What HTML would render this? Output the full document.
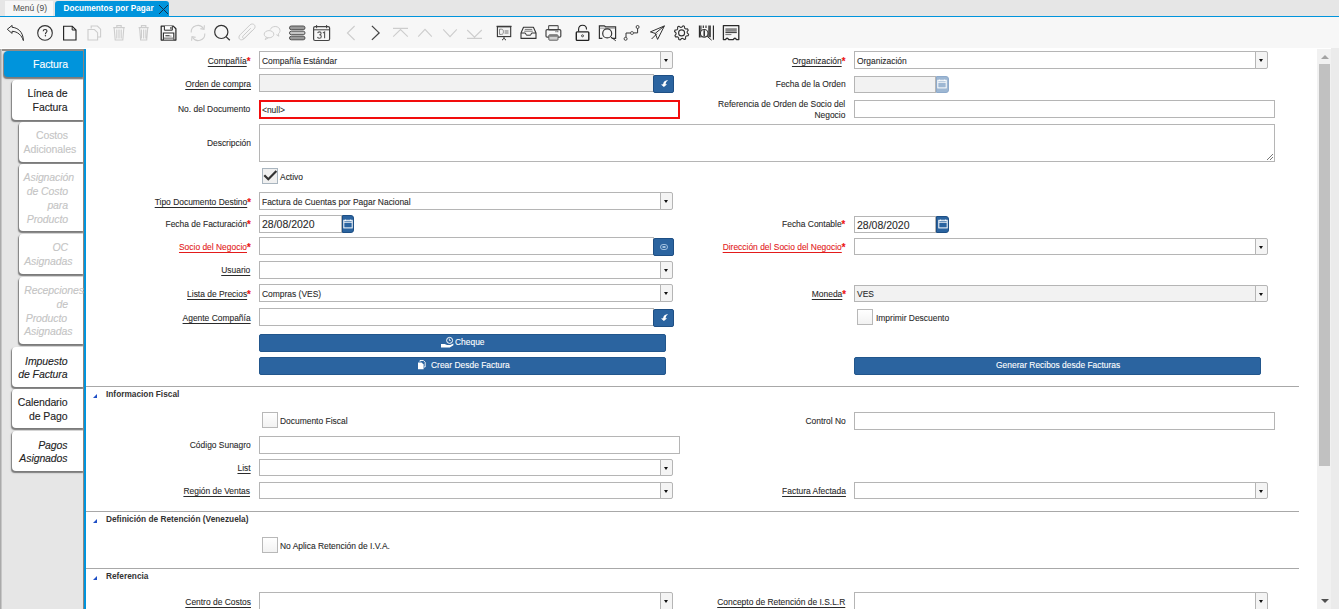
<!DOCTYPE html><html><head><meta charset='utf-8'><style>
*{box-sizing:border-box;margin:0;padding:0}
html,body{width:1339px;height:609px;overflow:hidden;background:#fff;font-family:"Liberation Sans", sans-serif;color:#333;position:relative}
.a{position:absolute}
.tx{position:absolute;white-space:nowrap;-webkit-text-stroke:0.1px currentColor}
u{text-decoration:underline;text-underline-offset:1.5px;text-decoration-thickness:1px}
.req{color:#ec1111;font-weight:bold;font-size:10.5px;position:relative;top:0.8px;letter-spacing:0;line-height:0}
.inp{position:absolute;border:1px solid #b5b5b5;background:#fff}
.ro{background:#f2f2f2}
.cbtn{position:absolute;border:1px solid #b5b5b5;border-radius:0 2px 2px 0;background:#f4f4f4}
.cbtn:after{content:"";position:absolute;left:3.4px;top:7px;border-left:2.8px solid transparent;border-right:2.8px solid transparent;border-top:3.4px solid #111}
.bbtn{position:absolute;background:#2b64a0;border:1px solid #1e4f84;border-radius:2px}
.btn{position:absolute;background:#2b64a0;border:1px solid #22568c;border-radius:2px}
.chk{position:absolute;width:16px;height:16px;border:1px solid #b8b8b8;background:linear-gradient(#fff,#f2f2f2)}
.chk.on{border-color:#a9b5bf;background:#f0f0f0}
.sep{position:absolute;left:86px;width:1213px;height:1px;background:#a8a8a8}
.tri{position:absolute;width:0;height:0;border-left:4.5px solid transparent;border-bottom:4.5px solid #1f4fc6}
.tab{position:absolute;background:#fff;border-radius:4px 0 0 4px;box-shadow:-0.5px 1.2px 1.2px 0 #7a7a7a}
</style></head><body>
<div class="a" style="left:0;top:0;width:1339px;height:16px;background:#e6e6e6"></div>
<div class="a" style="left:5px;top:1px;width:48px;height:15px;background:#f7f7f7"></div>
<div class="tx" style="left:13px;top:2.55px;font-size:8.5px;line-height:11px;color:#4a4a4a;-webkit-text-stroke:0">Menú (9)</div>
<div class="a" style="left:55px;top:1px;width:114px;height:16px;background:#0094dc;border-radius:3px 3px 0 0"></div>
<div class="tx" style="left:63.5px;top:3.26px;font-size:8.2px;line-height:11px;color:#fff;font-weight:bold;-webkit-text-stroke:0">Documentos por Pagar</div>
<svg class="a" style="left:158px;top:4px" width="11" height="11" viewBox="0 0 11 11"><path d="M1 1L10 10M10 1L1 10" stroke="#12304a" stroke-width="1"/></svg>
<div class="a" style="left:0;top:16px;width:1339px;height:1px;background:#0094dc"></div>
<div class="a" style="left:0;top:17px;width:1339px;height:31px;background:#f7f7f7"></div>
<div class="a" style="left:0;top:48px;width:86px;height:1px;background:#fff"></div>
<div class="a" style="left:0;top:49px;width:86px;height:560px;background:#e6e6e6;border-top:2px solid #918c88"></div>
<div class="a" style="left:0;top:49px;width:2px;height:560px;background:linear-gradient(90deg,#9c9c9c,#d4d4d4)"></div>
<div class="a" style="left:83px;top:49px;width:1px;height:560px;background:#8c8682"></div>
<div class="tab" style="left:4px;top:51px;width:79px;height:26px;background:#0094dc"></div>
<div class="tx" style="right:1271px;text-align:right;top:57.06px;font-size:10.5px;line-height:14px;color:#fff;letter-spacing:-0.1px;">Factura</div>
<div class="tab" style="left:12px;top:80px;width:71px;height:40px;background:#fff"></div>
<div class="tx" style="right:1271.5px;text-align:right;top:86.06px;font-size:10.5px;line-height:14px;color:#222;letter-spacing:-0.1px;">Línea de</div>
<div class="tx" style="right:1271.5px;text-align:right;top:99.86px;font-size:10.5px;line-height:14px;color:#222;letter-spacing:-0.1px;">Factura</div>
<div class="tab" style="left:19px;top:122px;width:64px;height:40px;background:#fff"></div>
<div class="tx" style="right:1271px;text-align:right;top:128.36px;font-size:10.5px;line-height:14px;color:#c4c4c4;letter-spacing:-0.1px;">Costos</div>
<div class="tx" style="left:23.6px;top:141.96px;font-size:10.5px;line-height:14px;color:#c4c4c4;letter-spacing:-0.1px;">Adicionales</div>
<div class="tab" style="left:19px;top:164px;width:64px;height:67px;background:#fff"></div>
<div class="tx" style="left:23.6px;top:170.36px;font-size:10.5px;line-height:14px;color:#c4c4c4;font-style:italic;letter-spacing:-0.1px;">Asignación</div>
<div class="tx" style="right:1271px;text-align:right;top:184.16px;font-size:10.5px;line-height:14px;color:#c4c4c4;font-style:italic;letter-spacing:-0.1px;">de Costo</div>
<div class="tx" style="right:1271px;text-align:right;top:197.86px;font-size:10.5px;line-height:14px;color:#c4c4c4;font-style:italic;letter-spacing:-0.1px;">para</div>
<div class="tx" style="right:1271px;text-align:right;top:211.66px;font-size:10.5px;line-height:14px;color:#c4c4c4;font-style:italic;letter-spacing:-0.1px;">Producto</div>
<div class="tab" style="left:19px;top:234px;width:64px;height:40px;background:#fff"></div>
<div class="tx" style="right:1271px;text-align:right;top:240.06px;font-size:10.5px;line-height:14px;color:#c4c4c4;font-style:italic;letter-spacing:-0.1px;">OC</div>
<div class="tx" style="left:24.2px;top:253.86px;font-size:10.5px;line-height:14px;color:#c4c4c4;font-style:italic;letter-spacing:-0.1px;">Asignadas</div>
<div class="tab" style="left:19px;top:276.5px;width:64px;height:67.5px;background:#fff"></div>
<div class="tx" style="left:24.2px;top:283.36px;font-size:10.5px;line-height:14px;color:#c4c4c4;font-style:italic;letter-spacing:-0.1px;">Recepciones</div>
<div class="tx" style="right:1271px;text-align:right;top:296.96px;font-size:10.5px;line-height:14px;color:#c4c4c4;font-style:italic;letter-spacing:-0.1px;">de</div>
<div class="tx" style="left:25.8px;top:310.56px;font-size:10.5px;line-height:14px;color:#c4c4c4;font-style:italic;letter-spacing:-0.1px;">Producto</div>
<div class="tx" style="left:24.2px;top:324.16px;font-size:10.5px;line-height:14px;color:#c4c4c4;font-style:italic;letter-spacing:-0.1px;">Asignadas</div>
<div class="tab" style="left:12px;top:347px;width:71px;height:40px;background:#fff"></div>
<div class="tx" style="right:1271.5px;text-align:right;top:353.56px;font-size:10.5px;line-height:14px;color:#222;font-style:italic;letter-spacing:-0.1px;">Impuesto</div>
<div class="tx" style="right:1271.5px;text-align:right;top:367.36px;font-size:10.5px;line-height:14px;color:#222;font-style:italic;letter-spacing:-0.1px;">de Factura</div>
<div class="tab" style="left:12px;top:389px;width:71px;height:39px;background:#fff"></div>
<div class="tx" style="right:1271.5px;text-align:right;top:395.26px;font-size:10.5px;line-height:14px;color:#222;letter-spacing:-0.1px;">Calendario</div>
<div class="tx" style="right:1271.5px;text-align:right;top:409.06px;font-size:10.5px;line-height:14px;color:#222;letter-spacing:-0.1px;">de Pago</div>
<div class="tab" style="left:12px;top:431px;width:71px;height:40px;background:#fff"></div>
<div class="tx" style="right:1271.5px;text-align:right;top:437.66px;font-size:10.5px;line-height:14px;color:#222;font-style:italic;letter-spacing:-0.1px;">Pagos</div>
<div class="tx" style="right:1271.5px;text-align:right;top:451.46px;font-size:10.5px;line-height:14px;color:#222;font-style:italic;letter-spacing:-0.1px;">Asignados</div>
<div class="a" style="left:84px;top:49px;width:2px;height:560px;background:#0094dc"></div>
<div class="a" style="left:86px;top:48px;width:1231px;height:561px;background:#fff"></div>
<div class="tx" style="right:1088.5px;text-align:right;transform:scaleX(0.9);transform-origin:100% 0;top:55.24px;font-size:9.4px;line-height:12px;color:#2a2a2a"><u>Compañía</u><span class="req">*</span></div>
<div class="inp " style="left:259px;top:51px;width:401.5px;height:18px"></div>
<div class="tx" style="left:262px;transform:scaleX(0.9);transform-origin:0 0;top:55.34px;font-size:9.4px;line-height:12px;color:#2a2a2a;">Compañía Estándar</div>
<div class="cbtn" style="left:659.5px;top:51px;width:13px;height:18px"></div>
<div class="tx" style="right:493.5px;text-align:right;transform:scaleX(0.9);transform-origin:100% 0;top:55.24px;font-size:9.4px;line-height:12px;color:#2a2a2a"><u>Organización</u><span class="req">*</span></div>
<div class="inp " style="left:854px;top:51px;width:401.5px;height:17.5px"></div>
<div class="tx" style="left:857px;transform:scaleX(0.9);transform-origin:0 0;top:55.09px;font-size:9.4px;line-height:12px;color:#2a2a2a;">Organización</div>
<div class="cbtn" style="left:1254.5px;top:51px;width:13px;height:17.5px"></div>
<div class="tx" style="right:1088.5px;text-align:right;transform:scaleX(0.9);transform-origin:100% 0;top:78.24px;font-size:9.4px;line-height:12px;color:#2a2a2a"><u>Orden de compra</u></div>
<div class="inp ro" style="left:259px;top:74px;width:395px;height:18px"></div>
<div class="bbtn" style="left:653px;top:75px;width:21px;height:18px"></div>
<svg class="a" style="left:658.5px;top:79.0px" width="10" height="10" viewBox="0 0 10 10"><path d="M2 5.5L4.9 8.1L8.1 5.3L6.5 5.2Q6.7 3 9.1 1.1Q4.5 1.5 4.1 5.2Z" fill="#fff"/></svg>
<div class="tx" style="right:493.5px;text-align:right;transform:scaleX(0.9);transform-origin:100% 0;top:78.24px;font-size:9.4px;line-height:12px;color:#2a2a2a">Fecha de la Orden</div>
<div class="inp ro" style="left:854px;top:75.5px;width:82px;height:17.0px"></div>
<div class="bbtn" style="left:936px;top:75.5px;width:12.5px;height:17.0px;background:#9db7d3;border-color:#8eaacb;border-radius:0 3px 3px 0"></div>
<svg class="a" style="left:937.25px;top:79.0px" width="10" height="10" viewBox="0 0 10 10"><rect x="0.8" y="1.3" width="8.4" height="7.6" fill="none" stroke="#fff" stroke-width="1"/><path d="M0.8 3.2H9.2" stroke="#fff" stroke-width="1"/><path d="M2.5 0.6V2M7.5 0.6V2" stroke="#fff" stroke-width="0.8"/></svg>
<div class="tx" style="right:1088.5px;text-align:right;transform:scaleX(0.9);transform-origin:100% 0;top:103.04px;font-size:9.4px;line-height:12px;color:#2a2a2a">No. del Documento</div>
<div class="a" style="left:259px;top:100px;width:421px;height:19px;border:2px solid #f20d0d;background:#fff"></div>
<div class="tx" style="left:262px;transform:scaleX(0.9);transform-origin:0 0;top:104.34px;font-size:9.4px;line-height:12px;color:#2a2a2a">&lt;null&gt;</div>
<div class="tx" style="right:493.5px;text-align:right;transform:scaleX(0.9);transform-origin:100% 0;top:97.84px;font-size:9.4px;line-height:12px;color:#2a2a2a">Referencia de Orden de Socio del</div>
<div class="tx" style="right:493.5px;text-align:right;transform:scaleX(0.9);transform-origin:100% 0;top:108.64px;font-size:9.4px;line-height:12px;color:#2a2a2a">Negocio</div>
<div class="inp " style="left:854px;top:100px;width:421px;height:17.5px"></div>
<div class="tx" style="right:1088.5px;text-align:right;transform:scaleX(0.9);transform-origin:100% 0;top:136.74px;font-size:9.4px;line-height:12px;color:#2a2a2a">Descripción</div>
<div class="inp " style="left:259px;top:124px;width:1016px;height:38px"></div>
<svg class="a" style="left:1265px;top:152px" width="9" height="9"><path d="M2 8L8 2M5 8L8 5" stroke="#555" stroke-width="0.8"/></svg>
<div class="chk on" style="left:262px;top:168px"></div>
<svg class="a" style="left:262px;top:168px" width="16" height="16" viewBox="0 0 16 16"><path d="M2.3 7.2L6.3 11.2L14.4 3" fill="none" stroke="#333" stroke-width="2.2"/></svg>
<div class="tx" style="left:280px;transform:scaleX(0.9);transform-origin:0 0;top:171.24px;font-size:9.4px;line-height:12px;color:#2a2a2a">Activo</div>
<div class="tx" style="right:1088.5px;text-align:right;transform:scaleX(0.9);transform-origin:100% 0;top:196.24px;font-size:9.4px;line-height:12px;color:#2a2a2a"><u>Tipo Documento Destino</u><span class="req">*</span></div>
<div class="inp " style="left:259px;top:192px;width:401.5px;height:17.5px"></div>
<div class="tx" style="left:262px;transform:scaleX(0.9);transform-origin:0 0;top:196.09px;font-size:9.4px;line-height:12px;color:#2a2a2a;">Factura de Cuentas por Pagar Nacional</div>
<div class="cbtn" style="left:659.5px;top:192px;width:13px;height:17.5px"></div>
<div class="tx" style="right:1088.5px;text-align:right;transform:scaleX(0.9);transform-origin:100% 0;top:218.24px;font-size:9.4px;line-height:12px;color:#2a2a2a">Fecha de Facturación<span class="req">*</span></div>
<div class="inp " style="left:259px;top:215px;width:82.5px;height:17.5px"></div>
<div class="tx" style="left:262px;top:217.30px;font-size:10.5px;line-height:14px;color:#2a2a2a;letter-spacing:0">28/08/2020</div>
<div class="bbtn" style="left:341.5px;top:215px;width:12.5px;height:17.5px;background:#2b64a0;border-color:#1e4f84;border-radius:0 3px 3px 0"></div>
<svg class="a" style="left:342.75px;top:218.75px" width="10" height="10" viewBox="0 0 10 10"><rect x="0.8" y="1.3" width="8.4" height="7.6" fill="none" stroke="#fff" stroke-width="1"/><path d="M0.8 3.2H9.2" stroke="#fff" stroke-width="1"/><path d="M2.5 0.6V2M7.5 0.6V2" stroke="#fff" stroke-width="0.8"/></svg>
<div class="tx" style="right:493.5px;text-align:right;transform:scaleX(0.9);transform-origin:100% 0;top:218.24px;font-size:9.4px;line-height:12px;color:#2a2a2a">Fecha Contable<span class="req">*</span></div>
<div class="inp " style="left:854px;top:215.5px;width:82.29999999999995px;height:17.0px"></div>
<div class="tx" style="left:857px;top:217.55px;font-size:10.5px;line-height:14px;color:#2a2a2a;letter-spacing:0">28/08/2020</div>
<div class="bbtn" style="left:936.3px;top:215.5px;width:12.5px;height:17.0px;background:#2b64a0;border-color:#1e4f84;border-radius:0 3px 3px 0"></div>
<svg class="a" style="left:937.55px;top:219.0px" width="10" height="10" viewBox="0 0 10 10"><rect x="0.8" y="1.3" width="8.4" height="7.6" fill="none" stroke="#fff" stroke-width="1"/><path d="M0.8 3.2H9.2" stroke="#fff" stroke-width="1"/><path d="M2.5 0.6V2M7.5 0.6V2" stroke="#fff" stroke-width="0.8"/></svg>
<div class="tx" style="right:1088.5px;text-align:right;transform:scaleX(0.9);transform-origin:100% 0;top:240.74px;font-size:9.4px;line-height:12px;color:#2a2a2a"><u style="color:#e31b1b">Socio del Negocio</u><span class="req">*</span></div>
<div class="inp " style="left:259px;top:237px;width:395px;height:18px"></div>
<div class="bbtn" style="left:653px;top:238px;width:21px;height:18px"></div>
<svg class="a" style="left:658.5px;top:242.0px" width="10" height="10" viewBox="0 0 10 10"><rect x="1.5" y="2.5" width="7" height="5" rx="2.5" fill="none" stroke="#9fc0e0" stroke-width="1"/><rect x="3.5" y="4" width="3" height="2" fill="#9fc0e0"/></svg>
<div class="tx" style="right:493.5px;text-align:right;transform:scaleX(0.9);transform-origin:100% 0;top:240.74px;font-size:9.4px;line-height:12px;color:#2a2a2a"><u style="color:#e31b1b">Dirección del Socio del Negocio</u><span class="req">*</span></div>
<div class="inp " style="left:854px;top:237.5px;width:401.5px;height:17.5px"></div>
<div class="cbtn" style="left:1254.5px;top:237.5px;width:13px;height:17.5px"></div>
<div class="tx" style="right:1088.5px;text-align:right;transform:scaleX(0.9);transform-origin:100% 0;top:264.24px;font-size:9.4px;line-height:12px;color:#2a2a2a"><u>Usuario</u></div>
<div class="inp " style="left:259px;top:261px;width:401.5px;height:17.5px"></div>
<div class="cbtn" style="left:659.5px;top:261px;width:13px;height:17.5px"></div>
<div class="tx" style="right:1088.5px;text-align:right;transform:scaleX(0.9);transform-origin:100% 0;top:287.74px;font-size:9.4px;line-height:12px;color:#2a2a2a"><u>Lista de Precios</u><span class="req">*</span></div>
<div class="inp " style="left:259px;top:284px;width:401.5px;height:17.5px"></div>
<div class="tx" style="left:262px;transform:scaleX(0.9);transform-origin:0 0;top:288.09px;font-size:9.4px;line-height:12px;color:#2a2a2a;">Compras (VES)</div>
<div class="cbtn" style="left:659.5px;top:284px;width:13px;height:17.5px"></div>
<div class="tx" style="right:493.5px;text-align:right;transform:scaleX(0.9);transform-origin:100% 0;top:287.74px;font-size:9.4px;line-height:12px;color:#2a2a2a"><u>Moneda</u><span class="req">*</span></div>
<div class="inp ro" style="left:854px;top:284.5px;width:401.5px;height:17.0px"></div>
<div class="tx" style="left:857px;transform:scaleX(0.9);transform-origin:0 0;top:288.34px;font-size:9.4px;line-height:12px;color:#2a2a2a;">VES</div>
<div class="cbtn" style="left:1254.5px;top:284.5px;width:13px;height:17.0px"></div>
<div class="tx" style="right:1088.5px;text-align:right;transform:scaleX(0.9);transform-origin:100% 0;top:311.74px;font-size:9.4px;line-height:12px;color:#2a2a2a"><u>Agente Compañía</u></div>
<div class="inp " style="left:259px;top:308px;width:395px;height:17.5px"></div>
<div class="bbtn" style="left:653px;top:309px;width:21px;height:17.5px"></div>
<svg class="a" style="left:658.5px;top:312.75px" width="10" height="10" viewBox="0 0 10 10"><path d="M2 5.5L4.9 8.1L8.1 5.3L6.5 5.2Q6.7 3 9.1 1.1Q4.5 1.5 4.1 5.2Z" fill="#fff"/></svg>
<div class="chk" style="left:857px;top:309px"></div>
<div class="tx" style="left:875.5px;transform:scaleX(0.9);transform-origin:0 0;top:311.74px;font-size:9.4px;line-height:12px;color:#2a2a2a">Imprimir Descuento</div>
<div class="btn" style="left:259px;top:334px;width:407px;height:18px"></div>
<div class="tx" style="left:455.2px;transform:scaleX(0.9);transform-origin:0 0;top:336.44px;font-size:9.4px;line-height:12px;color:#fff">Cheque</div>
<svg class="a" style="left:440px;top:336px" width="15" height="13" viewBox="440 336 15 13"><circle cx="449.6" cy="340.4" r="3" fill="none" stroke="#fff" stroke-width="1"/><path d="M449.4 338.6V340.6H450.8" fill="none" stroke="#fff" stroke-width="0.8"/><path d="M441 344H444.6L447.2 345H450.2L453.4 343.4V345.2L449.8 347.4H441Z" fill="#fff"/></svg>
<div class="btn" style="left:259px;top:357px;width:407px;height:18px"></div>
<div class="tx" style="left:430.8px;transform:scaleX(0.9);transform-origin:0 0;top:358.84px;font-size:9.4px;line-height:12px;color:#fff">Crear Desde Factura</div>
<svg class="a" style="left:416px;top:359px" width="11" height="12" viewBox="416 359 11 12"><path d="M420 361.8V360.5H423.4L425.2 362.3V367H424" fill="none" stroke="#fff" stroke-width="0.9"/><path d="M418 362.4H421.6L423.6 364.4V369.2H418Z" fill="#fff"/></svg>
<div class="btn" style="left:854px;top:357px;width:407px;height:18px"></div>
<div class="tx" style="left:996px;transform:scaleX(0.9);transform-origin:0 0;top:359.24px;font-size:9.4px;line-height:12px;color:#fff">Generar Recibos desde Facturas</div>
<div class="sep" style="top:386px"></div>
<div class="tri" style="left:93px;top:394.3px"></div>
<div class="tx" style="left:106px;top:389.22px;font-size:8.3px;line-height:11px;font-weight:bold;color:#333;-webkit-text-stroke:0">Informacion Fiscal</div>
<div class="chk" style="left:262px;top:411.5px"></div>
<div class="tx" style="left:280px;transform:scaleX(0.9);transform-origin:0 0;top:414.74px;font-size:9.4px;line-height:12px;color:#2a2a2a">Documento Fiscal</div>
<div class="tx" style="right:493.5px;text-align:right;transform:scaleX(0.9);transform-origin:100% 0;top:415.24px;font-size:9.4px;line-height:12px;color:#2a2a2a">Control No</div>
<div class="inp " style="left:854px;top:412px;width:421px;height:17.5px"></div>
<div class="tx" style="right:1088.5px;text-align:right;transform:scaleX(0.9);transform-origin:100% 0;top:439.24px;font-size:9.4px;line-height:12px;color:#2a2a2a">Código Sunagro</div>
<div class="inp " style="left:259px;top:436px;width:421px;height:18px"></div>
<div class="tx" style="right:1088.5px;text-align:right;transform:scaleX(0.9);transform-origin:100% 0;top:461.74px;font-size:9.4px;line-height:12px;color:#2a2a2a"><u>List</u></div>
<div class="inp " style="left:259px;top:458.5px;width:401.5px;height:17.5px"></div>
<div class="cbtn" style="left:659.5px;top:458.5px;width:13px;height:17.5px"></div>
<div class="tx" style="right:1088.5px;text-align:right;transform:scaleX(0.9);transform-origin:100% 0;top:484.74px;font-size:9.4px;line-height:12px;color:#2a2a2a"><u>Región de Ventas</u></div>
<div class="inp " style="left:259px;top:481.5px;width:401.5px;height:17.0px"></div>
<div class="cbtn" style="left:659.5px;top:481.5px;width:13px;height:17.0px"></div>
<div class="tx" style="right:493.5px;text-align:right;transform:scaleX(0.9);transform-origin:100% 0;top:484.74px;font-size:9.4px;line-height:12px;color:#2a2a2a"><u>Factura Afectada</u></div>
<div class="inp " style="left:854px;top:481.5px;width:402px;height:17.0px"></div>
<div class="cbtn" style="left:1255px;top:481.5px;width:13px;height:17.0px"></div>
<div class="sep" style="top:511px"></div>
<div class="tri" style="left:93px;top:519.3px"></div>
<div class="tx" style="left:106px;top:514.42px;font-size:8.3px;line-height:11px;font-weight:bold;color:#333;-webkit-text-stroke:0">Definición de Retención (Venezuela)</div>
<div class="chk" style="left:262px;top:537px"></div>
<div class="tx" style="left:280px;transform:scaleX(0.9);transform-origin:0 0;top:540.24px;font-size:9.4px;line-height:12px;color:#2a2a2a">No Aplica Retención de I.V.A.</div>
<div class="sep" style="top:568px"></div>
<div class="tri" style="left:93px;top:576.3px"></div>
<div class="tx" style="left:106px;top:571.42px;font-size:8.3px;line-height:11px;font-weight:bold;color:#333;-webkit-text-stroke:0">Referencia</div>
<div class="tx" style="right:1088.5px;text-align:right;transform:scaleX(0.9);transform-origin:100% 0;top:595.74px;font-size:9.4px;line-height:12px;color:#2a2a2a"><u>Centro de Costos</u></div>
<div class="inp " style="left:259px;top:592px;width:401.5px;height:20px"></div>
<div class="cbtn" style="left:659.5px;top:592px;width:13px;height:20px"></div>
<div class="tx" style="right:493.5px;text-align:right;transform:scaleX(0.9);transform-origin:100% 0;top:595.74px;font-size:9.4px;line-height:12px;color:#2a2a2a"><u>Concepto de Retención de I.S.L.R</u></div>
<div class="inp " style="left:854px;top:592px;width:401.5px;height:20px"></div>
<div class="cbtn" style="left:1254.5px;top:592px;width:13px;height:20px"></div>
<div class="a" style="left:1317px;top:49px;width:14px;height:560px;background:#f1f1f1"></div>
<div class="a" style="left:1331px;top:48px;width:8px;height:561px;background:#ebebeb"></div>
<div class="a" style="left:1319px;top:64px;width:11px;height:402px;background:#c1c1c1"></div>
<svg class="a" style="left:1321px;top:54px" width="8" height="6"><path d="M0 5L4 1L8 5Z" fill="#a3a3a3"/></svg>
<svg class="a" style="left:1321px;top:598px" width="8" height="6"><path d="M0 1L8 1L4 5Z" fill="#505050"/></svg>
<svg class="a" style="left:0;top:0" width="760" height="48" viewBox="0 0 760 48"><path d="M7.3 29.3L12.1 25.4V27.3C17.6 27.7 23.2 31.6 23.4 40.6C21.7 35.3 17.6 31.5 12.1 31.3V33.4Z" fill="none" stroke="#333" stroke-width="1" stroke-linejoin="round"/><circle cx="45" cy="32.9" r="7.3" fill="none" stroke="#333" stroke-width="1.1"/><path d="M43.2 31.3C43.2 30 44 29.5 45.1 29.5C46.3 29.5 47 30.2 47 31.1C47 32.4 45.4 32.6 45.4 34.3" fill="none" stroke="#333" stroke-width="1.1"/><circle cx="45.4" cy="35.7" r="0.7" fill="#333"/><path d="M63.6 26.2H72.2L76 30V40H63.6Z" fill="none" stroke="#222" stroke-width="1.15"/><path d="M72.2 26.2V30H76" fill="none" stroke="#222" stroke-width="1"/><path d="M91.2 28.5V26H97.4L100.6 29.2V37H98" fill="none" stroke="#cdcdcd" stroke-width="1.1"/><path d="M88 29.5H94.4L97.6 32.7V40H88Z" fill="none" stroke="#cdcdcd" stroke-width="1.1"/><path d="M113.2 27.6H124.8M116.8 27.6V25.6H121.2V27.6M114.2 28.2L115.2 40H122.8L123.8 28.2M116.8 29.5V38.5M119.0 29.5V38.5M121.2 29.5V38.5" fill="none" stroke="#cdcdcd" stroke-width="1.1"/><path d="M138.6 27.6H148.7M141.45 27.6V25.6H145.84999999999997V27.6M139.6 28.2L140.6 40H146.7L147.7 28.2M141.45 29.5V38.5M143.64999999999998 29.5V38.5M145.84999999999997 29.5V38.5" fill="none" stroke="#cdcdcd" stroke-width="1.1"/><path d="M161.2 26.1H173.3L175.9 28.7V40.1H161.2Z" fill="none" stroke="#2a2a2a" stroke-width="1.25" stroke-linejoin="round"/><path d="M164.4 26.1V30.2H172.3V26.1" fill="#fff" stroke="#2a2a2a" stroke-width="1"/><rect x="170.4" y="27" width="1" height="2.3" fill="#2a2a2a"/><path d="M163.4 40.1V33H173.8V40.1" fill="#fff" stroke="#2a2a2a" stroke-width="1.1"/><rect x="163.9" y="37.4" width="9.4" height="2.4" fill="#9a9a9a"/><rect x="165.4" y="35.2" width="4.2" height="1.1" fill="#333"/><rect x="169.6" y="35.7" width="2" height="0.7" fill="#666"/><path d="M191.2 32.5A6.6 6.6 0 0 1 203.5 28.8M204.8 33.5A6.6 6.6 0 0 1 192.5 37.2" fill="none" stroke="#cdcdcd" stroke-width="1.1"/><path d="M204.4 25.2L204 29.4L200.4 28.6M191.6 40.8L192 36.6L195.6 37.4" fill="none" stroke="#cdcdcd" stroke-width="1.1"/><circle cx="221.3" cy="31.9" r="6.6" fill="none" stroke="#333" stroke-width="1.2"/><path d="M226 36.6L229.8 40.2" stroke="#333" stroke-width="1.3"/><path d="M252.5 30.2L244 38.7C242.6 40.1 240.5 40.1 239.6 39.1C238.6 38.1 238.7 36.2 240.1 34.8L250 24.9C251.3 23.6 253.3 23.8 254.3 24.8C255.3 25.8 255.4 27.6 254.1 28.9L245.2 37.8C244.4 38.6 243.4 38.6 242.9 38.1C242.4 37.6 242.4 36.6 243.2 35.8L250.8 28.2" fill="none" stroke="#cdcdcd" stroke-width="1"/><ellipse cx="269" cy="34.2" rx="4.8" ry="3.6" fill="none" stroke="#cdcdcd" stroke-width="1"/><path d="M266.4 37.3L265.2 39.6L268.4 37.8" fill="none" stroke="#cdcdcd" stroke-width="1"/><path d="M270.2 29.6C271 27.6 273 26.5 275.2 26.5C278 26.5 280 28.3 280 30.6C280 32 279.3 33.2 278.2 34L278.9 36.2L276.4 34.7" fill="none" stroke="#cdcdcd" stroke-width="1"/><rect x="289.5" y="26" width="15.5" height="3.6999999999999993" rx="1.8" fill="#9a9a9a" stroke="#505050" stroke-width="1"/><rect x="289.5" y="31.2" width="15.5" height="3.5000000000000036" rx="1.8" fill="#c6c6c6" stroke="#505050" stroke-width="1"/><rect x="289.5" y="36.2" width="15.5" height="3.5999999999999943" rx="1.8" fill="#9a9a9a" stroke="#505050" stroke-width="1"/><rect x="313.6" y="26.6" width="16" height="13.9" rx="1.5" fill="none" stroke="#444" stroke-width="1.2"/><path d="M313.6 29.8H329.6M316.6 25V28.2M326.6 25V28.2" stroke="#444" stroke-width="1"/><path d="M317.6 33.1C317.9 32.3 318.6 31.9 319.4 31.9C320.4 31.9 321.1 32.5 321.1 33.3C321.1 34.2 320.3 34.8 319.3 34.8C320.4 34.8 321.3 35.3 321.3 36.4C321.3 37.5 320.4 38.2 319.4 38.2C318.5 38.2 317.8 37.8 317.5 37" fill="none" stroke="#555" stroke-width="1.1"/><path d="M322.9 33L324.6 31.9V38.3" fill="none" stroke="#555" stroke-width="1.1"/><path d="M354.6 26L347.4 33L354.6 40" fill="none" stroke="#cdcdcd" stroke-width="1.1"/><path d="M371.9 25.9L379.1 32.9L371.9 39.9" fill="none" stroke="#444" stroke-width="1.3"/><path d="M393 28.4H408M393.2 36.6L400.5 29.6L407.8 36.6" fill="none" stroke="#cdcdcd" stroke-width="1.1"/><path d="M418.2 36.6L425 29.4L431.8 36.6" fill="none" stroke="#cdcdcd" stroke-width="1.1"/><path d="M443.2 29.4L450 36.6L456.8 29.4" fill="none" stroke="#cdcdcd" stroke-width="1.1"/><path d="M467.2 30L474.5 37.2L481.8 30M467 38.4H482" fill="none" stroke="#cdcdcd" stroke-width="1.1"/><path d="M496.6 26.4H511.5" stroke="#333" stroke-width="1.3"/><rect x="497.4" y="26.8" width="13.3" height="9.8" fill="#f2f2f2" stroke="#333" stroke-width="1.1"/><path d="M499.5 29.2H501.5C503 29.2 503.4 30.3 503.4 31.8C503.4 33.3 503 34.4 501.5 34.4H499.5Z" fill="none" stroke="#888" stroke-width="1"/><path d="M504.6 31H508.5M504.6 33H508.5" stroke="#777" stroke-width="1.1"/><path d="M504 36.8V38.3M502 40.2L504 38.3L506 40.2" fill="none" stroke="#333" stroke-width="1"/><path d="M523.5 27.3H533.4L536 33V38.4H521V33Z" fill="none" stroke="#333" stroke-width="1.1" stroke-linejoin="round"/><path d="M521 33H525.4L526.4 35.2H530.6L531.6 33H536" fill="none" stroke="#333" stroke-width="1"/><path d="M524.8 29.4H532.2M524.2 31.2H532.8" stroke="#777" stroke-width="1"/><rect x="548.6" y="25.6" width="9.6" height="4.4" rx="0.8" fill="none" stroke="#555" stroke-width="1.1"/><rect x="546" y="29.6" width="14.8" height="7.6" rx="1.2" fill="none" stroke="#444" stroke-width="1.2"/><rect x="548.8" y="34.8" width="9.2" height="5.4" rx="0.8" fill="#d0d0d0" stroke="#555" stroke-width="0.9"/><path d="M549.4 36H557.4" stroke="#444" stroke-width="0.9"/><rect x="555.5" y="31.2" width="1" height="1" fill="#333"/><rect x="557.3" y="31.2" width="1" height="1" fill="#333"/><path d="M578.6 31.6V29.4C578.6 26.9 580.3 25.2 582.6 25.2C584.9 25.2 586.5 26.9 586.5 29.2V29.6" fill="none" stroke="#222" stroke-width="1.1"/><rect x="576.3" y="31.9" width="12.5" height="8.5" rx="0.8" fill="none" stroke="#222" stroke-width="1.4"/><circle cx="582.5" cy="35.8" r="1" fill="none" stroke="#333" stroke-width="0.9"/><path d="M602.4 38.3H599.4V25.8H604.2L605.6 26.8H615.6V38.3H611.6" fill="none" stroke="#333" stroke-width="1.2"/><path d="M599.8 28.2H615.2" stroke="#999" stroke-width="1"/><circle cx="607.2" cy="33.4" r="4.5" fill="none" stroke="#333" stroke-width="1.2"/><path d="M610.6 36.8L615.8 40.8" stroke="#333" stroke-width="1"/><circle cx="637.6" cy="27" r="1.5" fill="none" stroke="#333" stroke-width="0.9"/><circle cx="632" cy="33" r="1.5" fill="none" stroke="#555" stroke-width="0.9"/><circle cx="625.6" cy="38.8" r="1.5" fill="none" stroke="#333" stroke-width="0.9"/><path d="M637.6 28.5V32.9H633.5M630.5 33H626V37.3" fill="none" stroke="#333" stroke-width="1"/><path d="M664.4 25.9L650.4 31.9L655.2 33.4L657.6 39.4L664.4 25.9ZM655.2 33.4L664.4 25.9M651.6 39L657 33.6" fill="none" stroke="#333" stroke-width="1" stroke-linejoin="round"/><path d="M687.20 32.90L688.66 34.30L688.25 35.66L686.26 36.01L685.56 36.86L685.60 38.89L684.36 39.55L682.69 38.39L681.60 38.50L680.20 39.96L678.84 39.55L678.49 37.56L677.64 36.86L675.61 36.90L674.95 35.66L676.11 33.99L676.00 32.90L674.54 31.50L674.95 30.14L676.94 29.79L677.64 28.94L677.60 26.91L678.84 26.25L680.51 27.41L681.60 27.30L683.00 25.84L684.36 26.25L684.71 28.24L685.56 28.94L687.59 28.90L688.25 30.14L687.09 31.81Z" fill="none" stroke="#333" stroke-width="1.1" stroke-linejoin="round"/><circle cx="681.6" cy="32.9" r="3" fill="none" stroke="#333" stroke-width="1.1"/><path d="M699.4 25.6V37.5M700.9 25.6V37.5M703.3 25.6V28M706 25.6V28M708.9 25.6V37.2M710.2 25.6V37.2M713.4 25.6V39.8" stroke="#222" stroke-width="1.1"/><circle cx="704.2" cy="33.3" r="3.8" fill="#f7f7f7" stroke="#333" stroke-width="1.1"/><path d="M704.2 30.3V36.3" stroke="#222" stroke-width="1.4"/><path d="M707 36.2L711.6 40.2" stroke="#333" stroke-width="1"/><path d="M723.4 25.6H738.8V39.6H736.4C735.6 37.8 734.2 37.8 733.4 39.6H728.6C727.8 37.8 726.4 37.8 725.6 39.6H723.4Z" fill="none" stroke="#2a2a2a" stroke-width="1.3" stroke-linejoin="round"/><rect x="725.4" y="28.2" width="11.4" height="3.6" fill="#888"/><path d="M725.4 32.6H736.8" stroke="#333" stroke-width="1"/><path d="M725.4 34.6H731.4" stroke="#666" stroke-width="0.9"/></svg>
</body></html>
